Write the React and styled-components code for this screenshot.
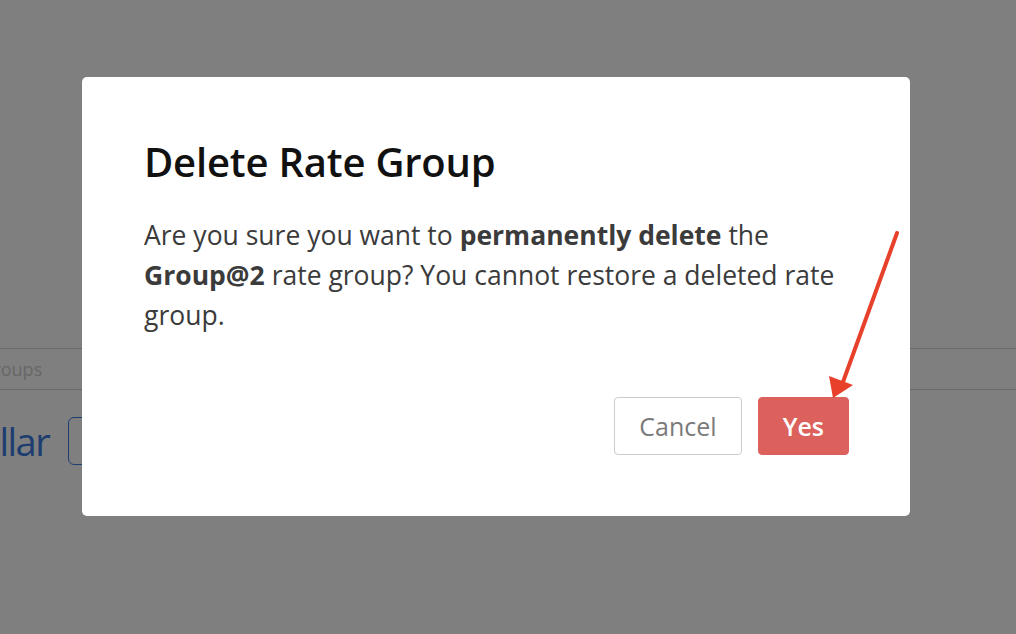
import React from 'react';
import styled, { createGlobalStyle } from 'styled-components';

const GlobalStyle = createGlobalStyle`
  html, body {
    margin: 0;
    padding: 0;
    height: 100%;
    background: #ffffff;
    font-family: 'Open Sans', 'Noto Sans', sans-serif;
  }
  #root {
    height: 100%;
  }
`;

export default function App() {
  return (
    <>
      <GlobalStyle />
      <Page>
        <TabBar>
          <Tab>Rate Groups</Tab>
        </TabBar>
        <Toolbar>
          <Heading>Dollar</Heading>
          <AddButton>+</AddButton>
        </Toolbar>
      </Page>
      <Overlay>
        <Modal role='dialog' aria-labelledby='delete-title'>
          <Title id='delete-title'>Delete Rate Group</Title>
          <Message>
            Are you sure you want to <strong>permanently delete</strong> the{' '}
            <strong>Group@2</strong> rate group? You cannot restore a deleted
            rate group.
          </Message>
          <Actions>
            <Button>Cancel</Button>
            <Button $danger>Yes</Button>
          </Actions>
        </Modal>
      </Overlay>
      <Pointer width='1016' height='634' viewBox='0 0 1016 634'>
        <line
          x1='897'
          y1='233'
          x2='843'
          y2='382'
          stroke='#e8412b'
          strokeWidth='4'
          strokeLinecap='round'
        />
        <polygon points='833,398 829,376 853,385' fill='#e8412b' />
      </Pointer>
    </>
  );
}

const Page = styled.div`
  height: 100%;
  padding-top: 348px;
  box-sizing: border-box;
  overflow: hidden;
`;

const TabBar = styled.div`
  height: 42px;
  border-top: 1px solid #d4d4d4;
  border-bottom: 1px solid #d4d4d4;
  display: flex;
  align-items: center;
  box-sizing: border-box;
`;

const Tab = styled.span`
  margin-left: -62px;
  font-size: 18px;
  color: #cfcfcf;
  white-space: nowrap;
`;

const Toolbar = styled.div`
  display: flex;
  align-items: center;
  gap: 19px;
  margin-top: 25px;
  margin-left: -48px;
`;

const Heading = styled.h2`
  margin: 0;
  font-size: 38px;
  font-weight: 400;
  letter-spacing: -1.5px;
  color: #3a7ae0;
  white-space: nowrap;
`;

const AddButton = styled.button`
  width: 48px;
  height: 48px;
  border: 1px solid #3a7ae0;
  border-radius: 6px;
  background: #fff;
  color: #3a7ae0;
  font-size: 24px;
  font-family: inherit;
`;

const Overlay = styled.div`
  position: fixed;
  inset: 0;
  background: rgba(0, 0, 0, 0.5);
  padding: 77px 0 0 82px;
  box-sizing: border-box;
`;

const Modal = styled.div`
  width: 828px;
  height: 439px;
  box-sizing: border-box;
  background: #ffffff;
  border-radius: 5px;
  padding: 58px 61px 0 62px;
  display: flex;
  flex-direction: column;
`;

const Title = styled.h1`
  margin: 0;
  font-size: 40px;
  line-height: 54px;
  font-weight: 600;
  color: #111;
  letter-spacing: -0.2px;
`;

const Message = styled.p`
  margin: 26px 0 0;
  font-size: 26.5px;
  line-height: 40px;
  color: #3b3b3b;

  strong {
    font-weight: 700;
  }
`;

const Actions = styled.div`
  display: flex;
  justify-content: flex-end;
  gap: 16px;
  margin-top: 62px;
`;

const Button = styled.button`
  height: 58px;
  padding: 0 24px;
  border-radius: 4px;
  font-family: inherit;
  font-size: 25px;
  font-weight: ${(p) => (p.$danger ? 600 : 500)};
  border: 1px solid ${(p) => (p.$danger ? '#dc605c' : '#cccccc')};
  background: ${(p) => (p.$danger ? '#dc605c' : '#ffffff')};
  color: ${(p) => (p.$danger ? '#ffffff' : '#7a7a7a')};
  cursor: pointer;
`;

const Pointer = styled.svg`
  position: fixed;
  top: 0;
  left: 0;
  pointer-events: none;
`;
